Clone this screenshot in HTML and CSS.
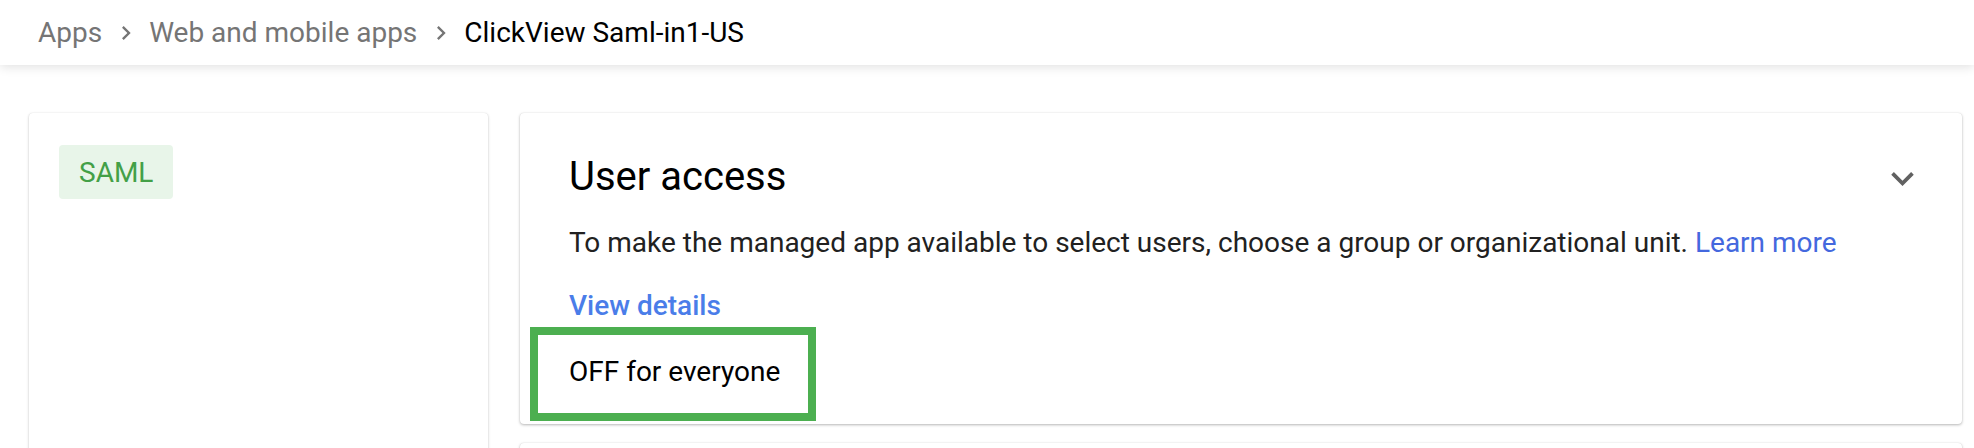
FILE: index.html
```html
<!DOCTYPE html>
<html lang="en">
<head>
<meta charset="utf-8">
<title>ClickView Saml-in1-US</title>
<link rel="stylesheet" href="styles.css">
</head>
<body>
<header class="topbar">
  <nav class="crumbs">
    <span class="crumb">Apps</span>
    <svg class="crumb-sep" viewBox="0 0 24 24"><path d="M10 6L8.59 7.41 13.17 12l-4.58 4.59L10 18l6-6z"/></svg>
    <span class="crumb">Web and mobile apps</span>
    <svg class="crumb-sep" viewBox="0 0 24 24"><path d="M10 6L8.59 7.41 13.17 12l-4.58 4.59L10 18l6-6z"/></svg>
    <span class="crumb crumb-current">ClickView Saml-in1-US</span>
  </nav>
</header>
<main class="layout">
  <aside class="side-card">
    <span class="chip">SAML</span>
  </aside>
  <section class="cards">
    <div class="card">
      <div class="card-head">
        <h2 class="card-title">User access</h2>
        <svg class="expand" viewBox="0 0 24 24"><path d="M16.59 8.59L12 13.17 7.41 8.59 6 10l6 6 6-6z"/></svg>
      </div>
      <p class="card-desc">To make the managed app available to select users, choose a group or organizational unit. <a class="learn" href="#">Learn more</a></p>
      <a class="view-details" href="#">View details</a>
      <div class="status">OFF for everyone</div>
    </div>
    <div class="card card-next"></div>
  </section>
</main>
</body>
</html>
```
FILE: styles.css
```css
*, *::before, *::after { box-sizing: border-box; }
html, body { margin: 0; padding: 0; }
body {
  background: #fff;
  font-family: Roboto, "Noto Sans", "Liberation Sans", sans-serif;
  color: #212121;
  overflow: hidden;
  height: 448px;
}
.topbar {
  position: relative;
  z-index: 1;
  height: 65px;
  background: #fff;
  box-shadow: 0 2px 10px rgba(0,0,0,0.12);
  display: flex;
  align-items: center;
  padding-left: 38px;
}
.crumbs {
  display: flex;
  align-items: center;
  font-size: 28px;
  line-height: 40px;
  padding-top: 1px;
}
.crumb { color: #757575; }
.crumb-current { color: #000; }
.crumb-sep {
  width: 28px;
  height: 28px;
  fill: #757575;
  margin: 0 9px 0 10px;
}
.layout {
  display: grid;
  grid-template-columns: 459px 1fr;
  gap: 32px;
  padding: 48px 12px 0 29px;
  align-items: start;
}
.side-card {
  background: #fff;
  border-radius: 4px;
  box-shadow: 0 1px 3px rgba(0,0,0,0.22), 0 0 1px rgba(0,0,0,0.12);
  min-height: 420px;
  padding: 32px 30px;
}
.chip {
  display: inline-flex;
  align-items: center;
  height: 54px;
  padding: 0 20px;
  background: #e8f5e9;
  color: #43a047;
  border-radius: 4px;
  font-size: 28px;
}
.cards {
  display: flex;
  flex-direction: column;
  gap: 19px;
}
.card {
  background: #fff;
  border-radius: 4px;
  box-shadow: 0 1px 3px rgba(0,0,0,0.28), 0 0 1px rgba(0,0,0,0.12);
  padding: 40px 37px 32px 49px;
}
.card-next { height: 60px; padding: 0; }
.card-head {
  display: flex;
  align-items: center;
  justify-content: space-between;
}
.card-title {
  margin: 0;
  font-size: 40px;
  font-weight: 400;
  line-height: 48px;
  color: #000;
}
.expand {
  width: 45px;
  height: 45px;
  fill: #616161;
  margin-top: 3px;
}
.card-desc {
  margin: 22px 0 0;
  font-size: 28px;
  line-height: 40px;
  color: #212121;
}
.learn {
  color: #4468de;
  text-decoration: none;
}
.view-details {
  display: block;
  margin-top: 23px;
  font-size: 28px;
  line-height: 40px;
  font-weight: 500;
  color: #4a7de9;
  text-decoration: none;
}
.status {
  position: relative;
  margin-top: 26px;
  font-size: 28px;
  line-height: 40px;
  color: #000;
}
.status::after {
  content: "";
  position: absolute;
  left: -39px;
  top: -25px;
  width: 286px;
  height: 94px;
  border: 8px solid #4caf50;
}
```
